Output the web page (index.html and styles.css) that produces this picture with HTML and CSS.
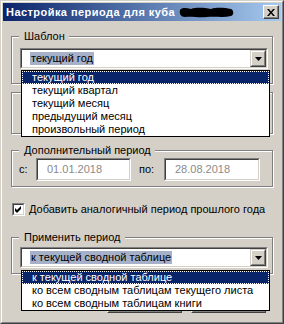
FILE: index.html
```html
<!DOCTYPE html>
<html lang="ru">
<head>
<meta charset="utf-8">
<title>Настройка периода для куба</title>
<link rel="stylesheet" href="styles.css">
</head>
<body>
<div class="window">
  <div class="frame">
    <div class="titlebar">
      <span class="title">Настройка периода для куба</span>
      <svg class="redact" width="56" height="12" viewBox="0 0 56 12"><path d="M1 4 C3 1 8 2 12 3 C18 1 26 2 32 3 C38 1 46 2 52 3 C55 4 55 9 52 10 C44 12 36 10 28 11 C20 12 12 10 6 11 C2 11 0 8 1 4 Z" fill="#000"/></svg>
      <span class="close"><svg width="8" height="7" viewBox="0 0 8 7"><path d="M0 0h2l2 2.5L6 0h2L5 3.5 8 7H6L4 4.5 2 7H0l3-3.5z" fill="#000"/></svg></span>
    </div>
    <div class="client">
      <div class="group g-template">
        <div class="legend">Шаблон</div>
        <div class="combo c-template">
          <div class="combo-in">
            <span class="value"><span class="sel">текущий год</span></span>
            <span class="dropbtn"><span class="dropbtn-in"><svg width="7" height="4" viewBox="0 0 7 4"><path d="M0 0h7L3.5 4z" fill="#000"/></svg></span></span>
          </div>
        </div>
      </div>
      <div class="group g-period"></div>
      <div class="group g-extra">
        <div class="legend">Дополнительный период</div>
        <div class="daterow">
          <span class="lbl lbl-from">с:</span>
          <div class="field f-from"><div class="field-in">01.01.2018</div></div>
          <span class="lbl lbl-to">по:</span>
          <div class="field f-to"><div class="field-in">28.08.2018</div></div>
        </div>
      </div>
      <div class="check">
        <span class="box"><span class="box-in"><svg width="7" height="7" viewBox="0 0 7 7"><path d="M0 2 2 4 6 0v3L2 7 0 5z" fill="#000"/></svg></span></span>
        <span class="check-label">Добавить аналогичный период прошлого года</span>
      </div>
      <div class="group g-apply">
        <div class="legend">Применить период</div>
        <div class="combo c-apply">
          <div class="combo-in">
            <span class="value"><span class="sel">к текущей сводной таблице</span></span>
            <span class="dropbtn"><span class="dropbtn-in"><svg width="7" height="4" viewBox="0 0 7 4"><path d="M0 0h7L3.5 4z" fill="#000"/></svg></span></span>
          </div>
        </div>
      </div>
      <div class="buttons">
        <div class="btn btn-ok"><div class="btn-in"></div></div>
        <div class="btn btn-cancel"><div class="btn-in"></div></div>
      </div>
    </div>
  </div>
  <ul class="list list-template">
    <li class="active">текущий год</li>
    <li>текущий квартал</li>
    <li>текущий месяц</li>
    <li>предыдущий месяц</li>
    <li>произвольный период</li>
  </ul>
  <ul class="list list-apply">
    <li class="active">к текущей сводной таблице</li>
    <li>ко всем сводным таблицам текущего листа</li>
    <li>ко всем сводным таблицам книги</li>
  </ul>
</div>
</body>
</html>
```

FILE: styles.css
```css
* {
  box-sizing: border-box;
  margin: 0;
  padding: 0;
}

body {
  margin: 0;
  background: #d4d0c8;
  font-family: "Liberation Sans", Arial, sans-serif;
  font-size: 11px;
  line-height: 13px;
  color: #000;
}

.window {
  position: relative;
  width: 284px;
  height: 324px;
  background: #d4d0c8;
  border: 1px solid;
  border-color: #d4d0c8 #404040 #404040 #d4d0c8;
}

.frame {
  height: 100%;
  border: 1px solid;
  border-color: #fff #808080 #808080 #fff;
  padding: 1px;
  display: flex;
  flex-direction: column;
}

.titlebar {
  height: 18px;
  flex: none;
  display: flex;
  align-items: center;
  padding: 0 2px 0 3px;
  background: linear-gradient(to right, #0a246a, #a6caf0);
}

.title {
  color: #fff;
  font-weight: bold;
  font-size: 11px;
  letter-spacing: 0.45px;
  white-space: nowrap;
}

.redact {
  margin-left: 4px;
  display: block;
}

.close {
  margin-left: auto;
  width: 16px;
  height: 14px;
  display: flex;
  align-items: center;
  justify-content: center;
  background: #d4d0c8;
  border: 1px solid;
  border-color: #fff #404040 #404040 #fff;
  box-shadow: inset -1px -1px 0 #808080;
}

.client {
  flex: 1;
  display: flex;
  flex-direction: column;
  padding-left: 8px;
}

.group {
  width: 262px;
  border: 1px solid #808080;
  box-shadow: inset 1px 1px 0 #fff, 1px 1px 0 #fff;
  display: flex;
  flex-direction: column;
  flex: none;
}

.legend {
  align-self: flex-start;
  margin: -7px 0 0 7px;
  padding: 0 4px 0 5px;
  background: #d4d0c8;
  white-space: nowrap;
}

.g-template {
  margin-top: 15px;
  height: 48px;
}

.g-period {
  margin-top: 8px;
  height: 42px;
}

.g-extra {
  margin-top: 16px;
  height: 37px;
}

.g-apply {
  margin-top: 21px;
  height: 37px;
}

/* combo box */
.combo {
  width: 248px;
  height: 21px;
  margin-left: 8px;
  border: 1px solid;
  border-color: #808080 #fff #fff #808080;
}

.c-template { margin-top: 5px; }
.c-apply { margin-top: 3px; }

.combo-in {
  height: 100%;
  display: flex;
  border: 1px solid;
  border-color: #404040 #d4d0c8 #d4d0c8 #404040;
  background: #fff;
}

.value {
  flex: 1;
  display: flex;
  align-items: center;
  padding-left: 8px;
  white-space: nowrap;
}

.sel {
  background: #a6b0c8;
  padding: 0 1px;
  line-height: 13px;
}

.dropbtn {
  width: 16px;
  height: 17px;
  border: 1px solid;
  border-color: #d4d0c8 #404040 #404040 #d4d0c8;
  background: #d4d0c8;
}

.dropbtn-in {
  height: 100%;
  display: flex;
  align-items: center;
  justify-content: center;
  border: 1px solid;
  border-color: #fff #808080 #808080 #fff;
}

.dropbtn svg {
  display: block;
  margin-left: 1px;
}

/* dates */
.daterow {
  display: flex;
  align-items: center;
  margin-top: 1px;
  padding-left: 7px;
}

.lbl-from { width: 17px; }
.lbl-to { width: 25px; margin-left: 8px; }

.field {
  height: 23px;
  border: 1px solid;
  border-color: #808080 #fff #fff #808080;
}

.f-from { width: 95px; }
.f-to { width: 96px; }

.field-in {
  height: 100%;
  border: 1px solid;
  border-color: #404040 #d4d0c8 #d4d0c8 #404040;
  background: #fff;
  color: #8a8a8a;
  padding-left: 9px;
  display: flex;
  align-items: center;
}

/* checkbox */
.check {
  margin-top: 16px;
  height: 13px;
  display: flex;
  align-items: center;
  flex: none;
}

.box {
  width: 13px;
  height: 13px;
  margin-left: 1px;
  border: 1px solid;
  border-color: #808080 #fff #fff #808080;
}

.box-in {
  height: 100%;
  display: flex;
  align-items: center;
  justify-content: center;
  border: 1px solid;
  border-color: #404040 #d4d0c8 #d4d0c8 #404040;
  background: #fff;
}

.box-in svg { display: block; }

.check-label {
  margin-left: 4px;
  white-space: nowrap;
}

/* buttons (mostly hidden under the open list) */
.buttons {
  display: flex;
  margin-top: 15px;
  padding-left: 96px;
  gap: 9px;
}

.btn {
  height: 24px;
  border: 1px solid;
  border-color: #fff #404040 #404040 #fff;
}

.btn-ok { width: 75px; }
.btn-cancel { width: 75px; }

.btn-in {
  height: 100%;
  border: 1px solid;
  border-color: #d4d0c8 #808080 #808080 #d4d0c8;
}

/* dropdown lists (overlays) */
.list {
  position: absolute;
  left: 20px;
  width: 249px;
  list-style: none;
  background: #fff;
  border: 1px solid #000;
}

.list-template { top: 69px; }
.list-apply { top: 269px; }

.list li {
  height: 13px;
  line-height: 13px;
  padding-left: 10px;
  white-space: nowrap;
}

.list li.active {
  background: #0a246a;
  color: #fff;
  outline: 1px dotted #fff;
  outline-offset: -1px;
}
```
